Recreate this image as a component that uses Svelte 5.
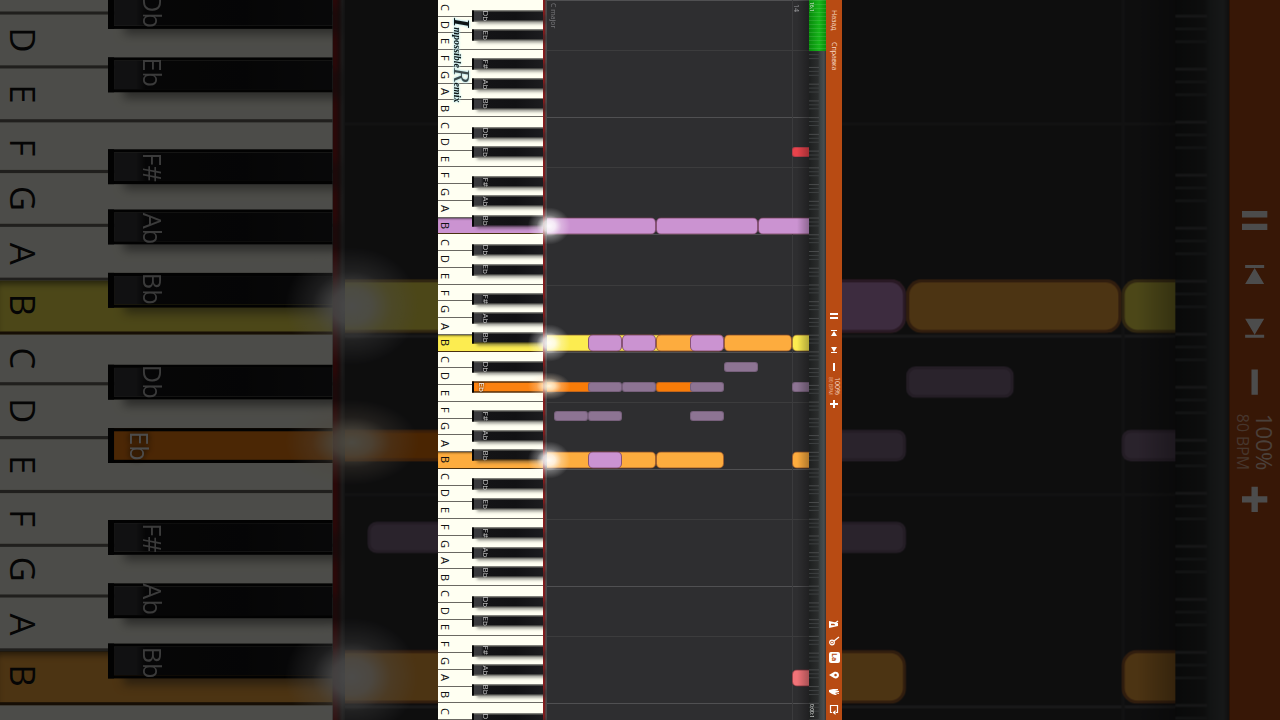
<script>
  let innerWidth = $state(1280);

  const playerWidth = 404;
  const zoom = $derived(innerWidth / playerWidth);

  // the keyboard shows six octaves and one extra C
  const whiteCount = 43;
  const semitones = (whiteCount * 12) / 7;
  const names = ['C', 'D', 'E', 'F', 'G', 'A', 'B'];
  const pressedWhite = { 13: 'lilac', 20: 'yellow', 27: 'amber' };
  const pressedBlack = { 39: 'orange' };

  const whites = Array.from({ length: whiteCount }, (_, i) => ({
    name: names[i % 7],
    at: (i + 0.5) / whiteCount,
    tone: pressedWhite[i] || ''
  }));

  const blackSteps = [
    [1, 'Db'],
    [3, 'Eb'],
    [6, 'F#'],
    [8, 'Ab'],
    [10, 'Bb']
  ];
  const blacks = [];
  for (let octave = 0; octave < 7; octave++) {
    for (const [step, name] of blackSteps) {
      const semi = octave * 12 + step;
      if (semi < semitones) {
        blacks.push({ name, at: (semi + 0.5) / semitones, tone: pressedBlack[semi] || '' });
      }
    }
  }

  // white notes use the white key index, black notes the semitone
  const notes = [
    { white: 13, from: -8, to: 109, tone: 'lilac' },
    { white: 13, from: 109, to: 211, tone: 'lilac' },
    { white: 13, from: 211, to: 280, tone: 'lilac' },
    { white: 20, from: -8, to: 177, tone: 'yellow' },
    { white: 20, from: 41, to: 75, tone: 'lilac' },
    { white: 20, from: 75, to: 109, tone: 'lilac' },
    { white: 20, from: 109, to: 150, tone: 'amber' },
    { white: 20, from: 143, to: 177, tone: 'lilac' },
    { white: 20, from: 177, to: 245, tone: 'amber' },
    { white: 20, from: 245, to: 280, tone: 'yellow' },
    { white: 27, from: -8, to: 109, tone: 'amber' },
    { white: 27, from: 41, to: 75, tone: 'lilac' },
    { white: 27, from: 109, to: 177, tone: 'amber' },
    { white: 27, from: 245, to: 280, tone: 'amber' },
    { white: 40, from: 245, to: 280, tone: 'rose' },
    { semi: 15, from: 245, to: 280, tone: 'red' },
    { semi: 37, from: 177, to: 211, tone: 'mauve' },
    { semi: 39, from: -8, to: 50, tone: 'orange' },
    { semi: 39, from: 41, to: 75, tone: 'mauve' },
    { semi: 39, from: 75, to: 109, tone: 'mauve' },
    { semi: 39, from: 109, to: 150, tone: 'orange' },
    { semi: 39, from: 143, to: 177, tone: 'mauve' },
    { semi: 39, from: 245, to: 280, tone: 'mauve' },
    { semi: 42, from: 7, to: 41, tone: 'mauve' },
    { semi: 42, from: 41, to: 75, tone: 'mauve' },
    { semi: 42, from: 143, to: 177, tone: 'mauve' }
  ];

  const sparks = [
    { at: 13.5 / whiteCount, warm: false },
    { at: 20.5 / whiteCount, warm: false },
    { at: 39.5 / semitones, warm: true },
    { at: 27.5 / whiteCount, warm: false }
  ];

  function noteTop(note) {
    return note.white !== undefined
      ? ((note.white + 0.5) / whiteCount) * 100
      : ((note.semi + 0.5) / semitones) * 100;
  }

  // a magnified player only needs the labels around its middle
  function label(key, scale) {
    return scale === 1 || Math.abs(key.at - 0.5) < 0.49 / scale ? key.name : '';
  }
</script>

<svelte:window bind:innerWidth />

{#snippet player(scale)}
  <div class="player">
    <div class="keyboard">
      <div class="whites">
        {#each whites as key}
          <button class="white {key.tone}" class:pressed={key.tone}>{label(key, scale)}</button>
        {/each}
      </div>
      {#each blacks as key}
        <button class="black {key.tone}" style="top: {key.at * 100}%">{label(key, scale)}</button>
      {/each}
      {#if scale === 1}
        <div class="logo"><span class="big">I</span>mpossible<span class="big thin">R</span>emix</div>
      {/if}
    </div>

    <div class="felt"></div>

    <div class="roll">
      {#each Array(7) as _, i}
        <div class="line octave" style="top: {((i * 7) / whiteCount) * 100}%"></div>
        <div class="line" style="top: {((i * 7 + 3) / whiteCount) * 100}%"></div>
      {/each}
      <div class="bar"></div>
      {#if scale === 1}
        <span class="scale">C major</span>
        <span class="measure">14</span>
      {/if}
      {#each notes as note}
        <div
          class="note {note.tone}"
          class:slim={note.semi !== undefined}
          style="top: {noteTop(note)}%; left: {note.from}px; width: {note.to - note.from}px"
        ></div>
      {/each}
      <div class="shade"></div>
    </div>

    <div class="timeline">
      {#if scale === 1}
        <div class="played"></div>
        <span class="position">16.1</span>
        <span class="time">0:00:1</span>
      {/if}
    </div>

    <div class="toolbar">
      <nav>
        {#if scale === 1}
          <button>Назад</button>
          <button>Справка</button>
        {/if}
      </nav>
      <div class="group">
        <button class="icon" aria-label="Pause">
          <svg viewBox="0 0 16 16"><path d="M4 5h8v2H4zM4 9h8v2H4z" /></svg>
        </button>
        <button class="icon" aria-label="Previous">
          <svg viewBox="0 0 16 16"><path d="M5 5h6v1H5zM8 6l3 5H5z" /></svg>
        </button>
        <button class="icon" aria-label="Next">
          <svg viewBox="0 0 16 16"><path d="M5 10h6v1H5zM8 10l3-5H5z" /></svg>
        </button>
        <button class="icon" aria-label="Slower">
          <svg viewBox="0 0 16 16"><path d="M7 4h2v8H7z" /></svg>
        </button>
        <div class="tempo">
          <span>100%</span>
          <small>80 BPM</small>
        </div>
        <button class="icon" aria-label="Faster">
          <svg viewBox="0 0 16 16"><path d="M7 4h2v3h3v2H9v3H7V9H4V7h3z" /></svg>
        </button>
      </div>
      <div class="group end">
        {#if scale === 1}
          <button class="icon" aria-label="Metronome">
            <svg viewBox="0 0 16 16">
              <path d="M3 5l9 2v3l-9 2z" />
              <path class="cut" d="M5 8.5h4" />
              <path class="stroke" d="M8 8l4-3" />
            </svg>
          </button>
          <button class="icon" aria-label="Keys">
            <svg viewBox="0 0 16 16">
              <circle class="stroke" cx="6" cy="9.5" r="2.3" />
              <path class="stroke" d="M8 8l5-4" />
              <circle cx="6" cy="9.5" r="1" />
            </svg>
          </button>
          <button class="icon note-names">Lа</button>
          <button class="icon" aria-label="Marker">
            <svg viewBox="0 0 16 16">
              <path fill-rule="evenodd" d="M3 8l5-3c2-1 5 0 5 3s-3 4-5 3zM9.5 6.7a1.3 1.3 0 1 0 .1 0z" />
            </svg>
          </button>
          <button class="icon" aria-label="Hands">
            <svg viewBox="0 0 16 16">
              <path d="M3 6l4-1 5 0v1h-3l4 1v1H9l4 1v1l-4-1 2 2H9l-3-1-3-2z" />
            </svg>
          </button>
          <button class="icon" aria-label="Loop">
            <svg viewBox="0 0 16 16">
              <path class="stroke" d="M6 11.5H4.5v-7h7v7H10" />
              <path d="M9.500 9v5L6.500 11.500z" />
            </svg>
          </button>
        {/if}
      </div>
    </div>

    {#each sparks as spark}
      <div class="spark" class:warm={spark.warm} style="top: {spark.at * 100}%"></div>
    {/each}
  </div>
{/snippet}

<main>
  <div class="backdrop" inert aria-hidden="true">
    <div style="transform: scale({zoom})">
      {@render player(zoom)}
    </div>
  </div>
  {@render player(1)}
</main>

<style>
  :global(body) {
    background: #000;
  }

  main {
    position: relative;
    display: flex;
    justify-content: center;
    height: 100vh;
    overflow: hidden;
    font-family: 'Open Sans', 'Noto Sans', sans-serif;
  }

  .backdrop {
    position: absolute;
    inset: 0;
    display: flex;
    justify-content: center;
    filter: brightness(0.3);
  }

  button {
    margin: 0;
    padding: 0;
    border: 0;
    background: none;
    color: inherit;
    font: inherit;
  }

  .player {
    position: relative;
    display: grid;
    grid-template-columns: 105px 4px 262px 17px 16px;
    height: 100vh;
    overflow: hidden;
  }

  .keyboard {
    position: relative;
  }

  .whites {
    display: grid;
    grid-template-rows: repeat(43, 1fr);
    height: 100%;
  }

  .white {
    display: flex;
    align-items: center;
    justify-content: center;
    min-height: 0;
    padding-right: 91px;
    background: #fffff2;
    border-bottom: 1px solid #6a6862;
    color: #111;
    font-size: 11px;
    line-height: 14px;
    writing-mode: vertical-rl;
    text-orientation: sideways;
  }

  .pressed {
    box-shadow: inset 0 2px 2px -1px rgba(0, 0, 0, 0.5);
    border-bottom-color: #4a3010;
  }

  .black {
    position: absolute;
    left: 34px;
    width: 71px;
    height: 11px;
    display: flex;
    align-items: center;
    justify-content: center;
    transform: translateY(calc(1px - 50%));
    padding-left: 8px;
    padding-right: 53px;
    border: 1px solid #050505;
    border-left-width: 2px;
    border-right: 0;
    box-sizing: border-box;
    background: linear-gradient(90deg, #3a3a3d 0, #38383b 7px, #141416 10px, #121214 60%, #1c1c1f 100%);
    box-shadow: 4px 3px 3px -1px rgba(40, 40, 40, 0.5);
    color: #c4c4c4;
    font-size: 8px;
    line-height: 8px;
    writing-mode: vertical-rl;
    text-orientation: sideways;
  }

  .black.orange {
    background: #fb8210;
    box-shadow: none;
    padding-left: 4px;
    padding-right: 57px;
    color: #fff;
    text-shadow: 0 0 2px #000;
  }

  .logo {
    position: absolute;
    top: 18px;
    left: 6px;
    width: 30px;
    font-family: 'Liberation Serif', serif;
    font-size: 10px;
    font-style: italic;
    font-weight: 700;
    line-height: 24px;
    color: #0c1414;
    text-shadow: 0 0 1px #bfe6ea, 0 0 2px #bfe6ea, 0 0 2px #bfe6ea, 0 0 3px #bfe6ea;
    writing-mode: vertical-rl;
    text-orientation: sideways;
    white-space: nowrap;
  }

  .big {
    font-size: 24px;
    line-height: 24px;
  }

  .big.thin {
    font-weight: 400;
    color: #3c4a4c;
  }

  .felt {
    background: linear-gradient(90deg, #8c1a1c 0 1px, #5c2424 2px, #5a5757 3px, #3c3c3e 4px);
  }

  .roll {
    position: relative;
    overflow: hidden;
    background: #2e2e30;
  }

  .line {
    position: absolute;
    left: 0;
    right: 0;
    height: 1px;
    background: #3c3c3d;
  }

  .line.octave {
    background: #505052;
  }

  .bar {
    position: absolute;
    left: 245px;
    top: 0;
    bottom: 0;
    width: 1px;
    background: #3b3b3d;
  }

  .scale,
  .measure,
  .position,
  .time {
    position: absolute;
    writing-mode: vertical-rl;
    text-orientation: sideways;
    font-size: 7px;
    line-height: 10px;
    color: #77777a;
  }

  .scale {
    top: 3px;
    left: 1px;
  }

  .measure {
    top: 4px;
    right: 8px;
    color: #99999c;
  }

  .note {
    position: absolute;
    height: 17px;
    box-sizing: border-box;
    border: 1px solid rgba(70, 20, 30, 0.5);
    border-radius: 5px;
    transform: translateY(-50%);
  }

  .note.slim {
    height: 10px;
    border-radius: 3px;
    border-color: rgba(70, 50, 70, 0.3);
    transform: translateY(calc(1px - 50%));
  }

  .lilac {
    background-color: #cb93d1;
  }

  .yellow {
    background-color: #fcec50;
  }

  .amber {
    background-color: #fdac3e;
  }

  .note.orange {
    background: #f87c08;
  }

  .mauve {
    background: #8d7493;
  }

  .red {
    background: #e8434b;
  }

  .rose {
    background: #f17378;
  }

  .shade {
    position: absolute;
    top: 0;
    right: 0;
    bottom: 0;
    width: 12px;
    background: linear-gradient(90deg, transparent, rgba(0, 0, 0, 0.3));
  }

  .timeline {
    position: relative;
    background:
      linear-gradient(180deg, #484a4b 0 1px, transparent 1px 4px, #3c3f40 4px 5px, transparent 5px 8px, #3c3f40 8px 9px, transparent 9px) 0 0 / 10px calc(100% / 43) repeat-y,
      linear-gradient(90deg, #1d1f1f, #2b2d2d 9px, #3c4141 11px, #4a4f50 15px, #343030);
  }

  .played {
    height: 51px;
    background:
      repeating-linear-gradient(180deg, rgba(255, 255, 255, 0.1) 0 1px, transparent 1px 4px),
      linear-gradient(90deg, #078a0b, #18b51b 60%, #0a8f0d);
  }

  .position,
  .time {
    left: 0;
    color: #e4e8e4;
    font-size: 5px;
    line-height: 6px;
  }

  .position {
    top: 2px;
  }

  .time {
    bottom: 2px;
  }

  .toolbar {
    display: grid;
    grid-template-rows: 1fr auto 1fr;
    justify-items: center;
    background: #b84b13;
    color: #fff;
  }

  nav {
    display: flex;
    flex-direction: column;
    align-items: center;
    gap: 12px;
    padding-top: 10px;
    color: #f7dccb;
    font-size: 7px;
    line-height: 8px;
  }

  nav button {
    writing-mode: vertical-rl;
    text-orientation: sideways;
  }

  .group {
    display: flex;
    flex-direction: column;
    align-items: center;
  }

  .end {
    justify-content: flex-end;
    padding-bottom: 3px;
  }

  .icon {
    display: flex;
    align-items: center;
    justify-content: center;
    width: 16px;
    height: 17px;
  }

  .icon svg {
    width: 16px;
    height: 16px;
    fill: #fff;
  }

  .icon .stroke {
    fill: none;
    stroke: #fff;
    stroke-width: 1.2;
  }

  .icon .cut {
    stroke: #b84b13;
    stroke-width: 1.5;
  }

  .note-names {
    width: 11px;
    height: 11px;
    margin: 3px 0;
    border-radius: 2px;
    background: #fff;
    color: #b84b13;
    font-size: 7px;
    font-weight: 700;
    line-height: 10px;
    writing-mode: vertical-rl;
    text-orientation: sideways;
  }

  .tempo {
    display: flex;
    flex-direction: column;
    align-items: center;
    justify-content: center;
    height: 20px;
    writing-mode: vertical-rl;
    text-orientation: sideways;
    color: #f5d5c2;
    font-size: 7px;
    line-height: 8px;
  }

  .tempo small {
    color: #e8b497;
    font-size: 5px;
    line-height: 5px;
  }

  .spark {
    position: absolute;
    left: 86px;
    width: 50px;
    height: 44px;
    transform: translateY(-50%);
    background: radial-gradient(closest-side, rgba(255, 255, 255, 0.95) 0, rgba(255, 255, 255, 0.8) 25%, rgba(255, 255, 255, 0.3) 50%, transparent 85%);
    pointer-events: none;
  }

  .spark.warm {
    height: 32px;
    background: radial-gradient(closest-side, #fff6dc 0, rgba(255, 240, 210, 0.8) 25%, rgba(255, 230, 200, 0.3) 50%, transparent 85%);
  }
</style>
